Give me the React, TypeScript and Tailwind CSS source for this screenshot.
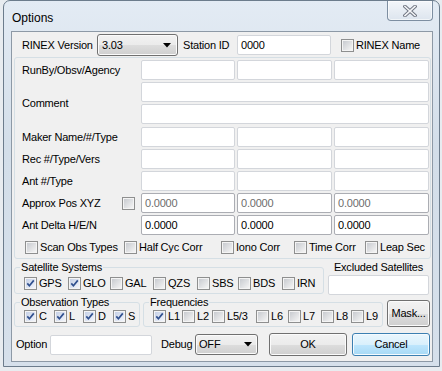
import React from "react";

const F = "font-['Liberation_Sans',Arial,sans-serif]";

function Box({ checked }: { checked?: boolean }) {
  return (
    <span className="w-[13px] h-[13px] shrink-0 border border-[#8e8f8f] bg-[#f4f4f4] p-[1px] flex">
      <span
        className={
          checked
            ? "flex-1 flex bg-[linear-gradient(135deg,#c5d0e6,#f2f5fb)]"
            : "flex-1 flex bg-[linear-gradient(135deg,#c8cbd0,#f4f4f4)]"
        }
      >
        {checked && (
          <svg width="9" height="9" viewBox="0 0 9 9">
            <path d="M1.3 4.4 L3.4 6.8 L7.8 1.4" fill="none" stroke="#30508f" strokeWidth="1.7" />
          </svg>
        )}
      </span>
    </span>
  );
}

function Check({ label, checked, w }: { label: string; checked?: boolean; w: string }) {
  return (
    <span className={`flex items-center gap-[2px] ${w}`}>
      <Box checked={checked} />
      <span className="whitespace-nowrap">{label}</span>
    </span>
  );
}

function Input({ cls, value, gray }: { cls: string; value?: string; gray?: boolean }) {
  return (
    <div
      className={`h-[20px] shrink-0 bg-white rounded-[2px] border flex items-center pl-[3px] ${cls} ${
        gray ? "text-[#6d6d6d]" : "text-black"
      }`}
    >
      {value}
    </div>
  );
}

function Arrow() {
  return (
    <svg width="8" height="5" viewBox="0 0 8 5">
      <path d="M0 0 H8 L4 4.5 Z" fill="#000" />
    </svg>
  );
}

const btn =
  "border border-[#707070] rounded-[3px] bg-[linear-gradient(to_bottom,#f2f2f2_0%,#ebebeb_50%,#dddddd_51%,#cfcfcf_100%)] shadow-[inset_0_0_0_1px_#fbfbfb]";

function Row3({ label, cls, value, gray }: { label: string; cls: string; value?: string; gray?: boolean }) {
  return (
    <div className="flex h-[20px] items-center">
      <span className="w-[119px] shrink-0">{label}</span>
      <div className="flex gap-[2px]">
        <Input cls={`w-[94px] ${cls}`} value={value} gray={gray} />
        <Input cls={`w-[95px] ${cls}`} value={value} gray={gray} />
        <Input cls={`w-[95px] ${cls}`} value={value} gray={gray} />
      </div>
    </div>
  );
}

const light = "border-[#d3d6db]";
const dark = "border-[#abadb3]";

export default function App() {
  return (
    <div className={`w-[442px] h-[371px] bg-[#e8ecf0] overflow-hidden text-[11px] leading-[13px] tracking-[-0.2px] text-black ${F}`}>
      <div className="ml-[3px] w-[437px] h-[367px] rounded-t-[7px] border border-[#6c7c8c] bg-[linear-gradient(to_bottom,#e3ebf4,#d3dee9_40%,#d6e0eb)] flex flex-col">
        {/* title bar */}
        <div className="h-[30px] flex items-start shrink-0">
          <span className="pl-[8px] pt-[10px] text-[12px] leading-[14px] tracking-normal">Options</span>
          <div className="ml-auto mr-[6px] w-[46px] h-[20px] rounded-b-[4px] border border-t-0 border-[#7d8ea1] bg-[linear-gradient(to_bottom,#f3f6fa,#dde5ee)] shadow-[inset_0_0_0_1px_#ffffff99] flex items-center justify-center">
            <svg width="14" height="12" viewBox="0 0 14 12">
              <path d="M2 1.5 L12 10.5 M12 1.5 L2 10.5" stroke="#6e7480" strokeWidth="3.6" strokeLinecap="square" />
              <path d="M2 1.5 L12 10.5 M12 1.5 L2 10.5" stroke="#f4f5f7" strokeWidth="1.6" strokeLinecap="square" />
            </svg>
          </div>
        </div>
        {/* client */}
        <div className="ml-[7px] w-[422px] h-[331px] border border-[#8d99a6] bg-[#f0f0f0] flex flex-col">
          {/* row 1 */}
          <div className="mt-[2px] h-[22px] flex items-center pl-[10px]">
            <span className="w-[75px] shrink-0">RINEX Version</span>
            <div className={`w-[81px] h-[22px] ${btn} flex items-center pl-[4px] pr-[6px]`}>
              <span className="flex-1">3.03</span>
              <Arrow />
            </div>
            <span className="ml-[5px] w-[54px] shrink-0">Station ID</span>
            <Input cls={`w-[94px] ${light}`} value="0000" />
            <span className="ml-[10px]">
              <Check label="RINEX Name" w="" />
            </span>
          </div>

          {/* panel */}
          <div className="ml-[2px] mt-[1px] w-[417px] h-[202px] border border-[#d5dfe5] rounded-[3px] pl-[7px] pt-[2px] flex flex-col gap-[2px]">
            <Row3 label="RunBy/Obsv/Agency" cls={light} />
            <div className="flex items-center">
              <span className="w-[119px] shrink-0">Comment</span>
              <div className="flex flex-col gap-[2px]">
                <Input cls={`w-[288px] ${light}`} />
                <Input cls={`w-[288px] ${light}`} />
              </div>
            </div>
            <div className="mt-[1px]">
              <Row3 label="Maker Name/#/Type" cls={light} />
            </div>
            <Row3 label="Rec #/Type/Vers" cls={light} />
            <Row3 label="Ant #/Type" cls={light} />
            <div className="flex h-[20px] items-center">
              <span className="w-[100px] shrink-0">Approx Pos XYZ</span>
              <Box />
              <div className="ml-[6px] flex gap-[2px]">
                <Input cls={`w-[94px] ${dark}`} value="0.0000" gray />
                <Input cls={`w-[95px] ${dark}`} value="0.0000" gray />
                <Input cls={`w-[95px] ${dark}`} value="0.0000" gray />
              </div>
            </div>
            <Row3 label="Ant Delta H/E/N" cls={dark} value="0.0000" />
            <div className="mt-[4px] h-[13px] flex items-center pl-[3px]">
              <Check label="Scan Obs Types" w="w-[99px]" />
              <Check label="Half Cyc Corr" w="w-[97px]" />
              <Check label="Iono Corr" w="w-[73px]" />
              <Check label="Time Corr" w="w-[71px]" />
              <Check label="Leap Sec" w="" />
            </div>
          </div>

          {/* section 2 */}
          <div className="ml-[2px] mt-[2px] flex items-start">
            <fieldset className="w-[310px] border border-[#d5dfe5] rounded-[3px] pl-[5px] pb-[3px]">
              <legend className="px-[1px] leading-[13px]">Satellite Systems</legend>
              <div className="pt-[3px] h-[16px] flex items-end pl-[4px]">
                <Check label="GPS" checked w="w-[44px]" />
                <Check label="GLO" checked w="w-[42px]" />
                <Check label="GAL" w="w-[43px]" />
                <Check label="QZS" w="w-[44px]" />
                <Check label="SBS" w="w-[41px]" />
                <Check label="BDS" w="w-[44px]" />
                <Check label="IRN" w="" />
              </div>
            </fieldset>
            <div className="ml-[4px] w-[101px] flex flex-col">
              <span className="text-center h-[13px] whitespace-nowrap">Excluded Satellites</span>
              <div className="mt-[1px]">
                <Input cls={`w-[101px] ${light}`} />
              </div>
            </div>
          </div>

          {/* section 3 */}
          <div className="ml-[2px] mt-[1px] flex items-start">
            <fieldset className="w-[126px] border border-[#d5dfe5] rounded-[3px] pl-[5px] pb-[3px]">
              <legend className="px-[1px] leading-[13px]">Observation Types</legend>
              <div className="pt-[1px] h-[14px] flex items-end pl-[4px]">
                <Check label="C" checked w="w-[30px]" />
                <Check label="L" checked w="w-[29px]" />
                <Check label="D" checked w="w-[30px]" />
                <Check label="S" checked w="" />
              </div>
            </fieldset>
            <fieldset className="ml-[3px] w-[240px] border border-[#d5dfe5] rounded-[3px] pl-[5px] pb-[3px]">
              <legend className="px-[1px] leading-[13px]">Frequencies</legend>
              <div className="pt-[1px] h-[14px] flex items-end pl-[4px]">
                <Check label="L1" checked w="w-[29px]" />
                <Check label="L2" w="w-[30px]" />
                <Check label="L5/3" w="w-[44px]" />
                <Check label="L6" w="w-[32px]" />
                <Check label="L7" w="w-[33px]" />
                <Check label="L8" w="w-[30px]" />
                <Check label="L9" w="" />
              </div>
            </fieldset>
            <div className={`ml-[4px] mt-[4px] w-[43px] h-[27px] ${btn} flex items-center justify-center`}>
              Mask...
            </div>
          </div>

          {/* bottom row */}
          <div className="mt-[6px] h-[23px] flex items-center pl-[4px]">
            <span className="w-[34px] shrink-0">Option</span>
            <Input cls={`w-[102px] ${light}`} />
            <span className="ml-[9px] w-[34px] shrink-0">Debug</span>
            <div className={`w-[63px] h-[21px] ${btn} flex items-center pl-[3px] pr-[5px]`}>
              <span className="flex-1">OFF</span>
              <Arrow />
            </div>
            <div className={`ml-[11px] w-[78px] h-[23px] ${btn} flex items-center justify-center`}>OK</div>
            <div className="ml-[5px] w-[78px] h-[23px] border border-[#3c7fb1] rounded-[3px] bg-[linear-gradient(to_bottom,#eaf6fd_0%,#d9f0fc_50%,#bee6fd_51%,#a7d9f5_100%)] shadow-[inset_0_0_0_1px_#f4fbff] flex items-center justify-center">
              Cancel
            </div>
          </div>
        </div>
      </div>
    </div>
  );
}
